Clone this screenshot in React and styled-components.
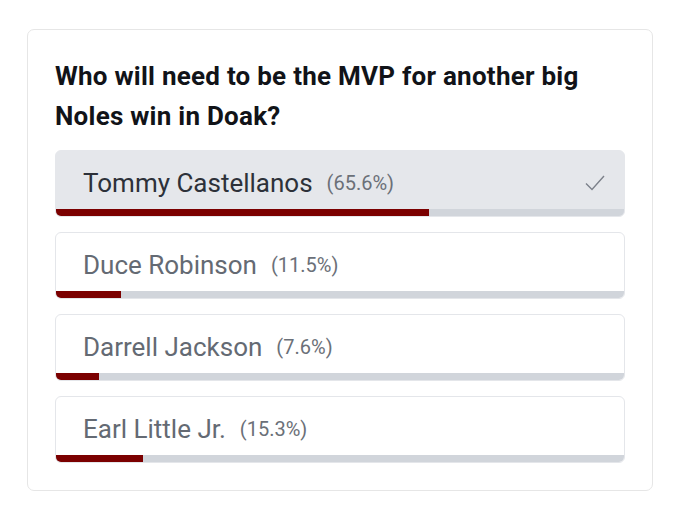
import React from 'react'
import styled, { createGlobalStyle } from 'styled-components'

const options = [
  { name: 'Tommy Castellanos', pct: 65.6, picked: true },
  { name: 'Duce Robinson', pct: 11.5 },
  { name: 'Darrell Jackson', pct: 7.6 },
  { name: 'Earl Little Jr.', pct: 15.3 },
]

const App = () => {
  return (
    <Page>
      <GlobalStyle />
      <Card>
        <Question>Who will need to be the MVP for another big Noles win in Doak?</Question>
        <List>
          {options.map((o) => (
            <Option key={o.name} picked={o.picked}>
              <Label>
                <Name picked={o.picked}>{o.name}</Name>
                <Pct>({o.pct}%)</Pct>
                {o.picked && (
                  <Check viewBox="0 0 20 16">
                    <path d="M1 8.5l6 6L19 1" />
                  </Check>
                )}
              </Label>
              <Track>
                <Fill style={{ width: `${o.pct}%` }} />
              </Track>
            </Option>
          ))}
        </List>
      </Card>
    </Page>
  )
}

const GlobalStyle = createGlobalStyle`
  body {
    margin: 0;
    background: #ffffff;
    font-family: Roboto, "Liberation Sans", sans-serif;
  }
`

const Page = styled.div`
  padding: 29px 27px 0 27px;
`

const Card = styled.div`
  border: 1px solid #e6e6e6;
  border-radius: 7px;
  padding: 26px 27px 27px 27px;
  width: 570px;
`

const Question = styled.div`
  font-size: 26px;
  font-weight: 700;
  line-height: 40px;
  color: #111318;
  margin-bottom: 14px;
  letter-spacing: 0.25px;
`

const List = styled.div`
  display: flex;
  flex-direction: column;
  gap: 15px;
`

const Option = styled.div`
  display: flex;
  flex-direction: column;
  height: 67px;
  border-radius: 6px;
  overflow: hidden;
  border: 1px solid ${(p) => (p.picked ? '#e5e7eb' : '#e4e6ea')};
  background: ${(p) => (p.picked ? '#e5e7eb' : '#ffffff')};
  box-sizing: border-box;
`

const Label = styled.div`
  flex: 1;
  display: flex;
  align-items: center;
  padding: 6px 19px 0 27px;
`

const Name = styled.span`
  font-size: 26px;
  color: ${(p) => (p.picked ? '#2d3139' : '#646a73')};
`

const Pct = styled.span`
  font-size: 20px;
  color: #6b7078;
  margin-left: 14px;
`

const Check = styled.svg`
  width: 20px;
  height: 16px;
  margin-left: auto;
  fill: none;
  stroke: #7c818a;
  stroke-width: 1.4;
`

const Track = styled.div`
  height: 7px;
  background: #d1d5db;
`

const Fill = styled.div`
  height: 100%;
  background: #7b0000;
`

export default App
